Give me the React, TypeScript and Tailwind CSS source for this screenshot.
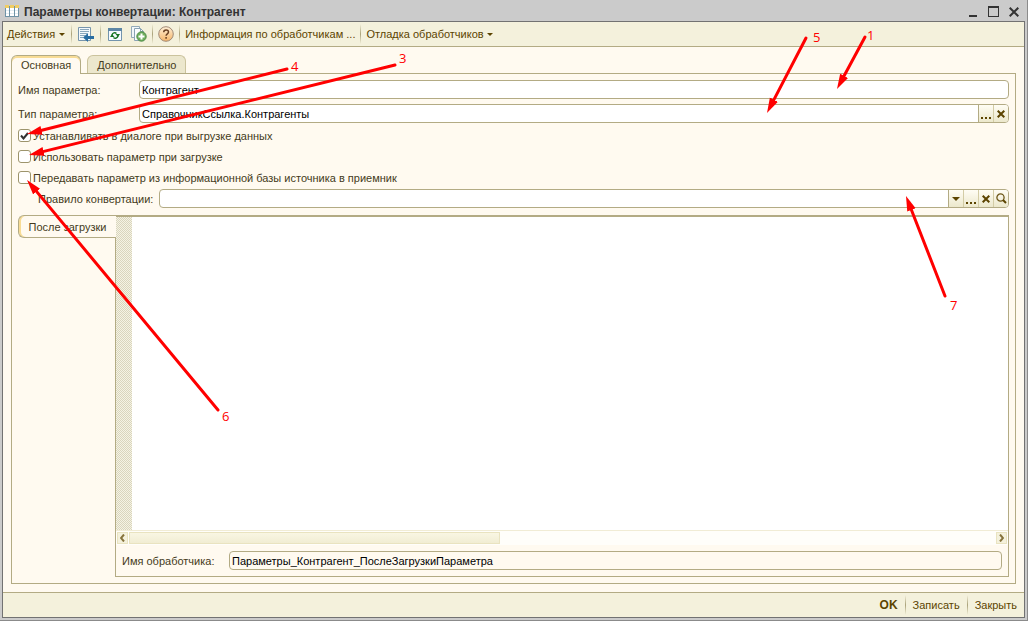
import { useState } from 'react';
import type { ReactNode } from 'react';
import clsx from 'clsx';

const arrows = [
  { label: '4', x: 291, y: 71, from: [287, 69], to: [27, 134] },
  { label: '3', x: 399, y: 63, from: [395, 65], to: [29, 155] },
  { label: '5', x: 813, y: 42, from: [806, 38], to: [767, 113] },
  { label: '1', x: 867, y: 40, from: [865, 37], to: [837, 89] },
  { label: '7', x: 950, y: 310, from: [945, 296], to: [906, 196] },
  { label: '6', x: 222, y: 421, from: [218, 410], to: [27, 180] },
];

const Arrows = () => (
  <svg
    className="absolute top-0 left-0 z-20 pointer-events-none"
    width="1029"
    height="622"
    viewBox="0 0 1029 622">
    <defs>
      <marker
        id="head"
        markerUnits="userSpaceOnUse"
        markerWidth="16"
        markerHeight="12"
        refX="15"
        refY="5"
        orient="auto">
        <path d="M0 0.5L15 5L0 9.5Z" fill="#ff0000" />
      </marker>
    </defs>
    {arrows.map(({ label, x, y, from, to }) => {
      const length = Math.hypot(to[0] - from[0], to[1] - from[1]);
      const k = (length - 8) / length;
      const endX = from[0] + (to[0] - from[0]) * k;
      const endY = from[1] + (to[1] - from[1]) * k;
      return (
        <g key={label}>
          <path
            d={`M${from[0]} ${from[1]}L${endX} ${endY}`}
            stroke="#ff0000"
            strokeWidth="3"
            strokeLinecap="round"
          />
          <path
            d={`M${from[0]} ${from[1]}L${to[0]} ${to[1]}`}
            stroke="none"
            fill="none"
            markerEnd="url(#head)"
          />
          <text x={x} y={y} fill="#ff0000" className="font-['Open_Sans',sans-serif] text-[13px]">
            {label}
          </text>
        </g>
      );
    })}
  </svg>
);

const TableIcon = () => (
  <svg width="14" height="12" viewBox="0 0 14 12" shapeRendering="crispEdges">
    <path d="M0 1H14V12H0Z" fill="#6f93a6" />
    <path d="M1 3H4V11H1ZM5 3H9V11H5ZM10 3H13V11H10Z" fill="#fff" />
    <path d="M0 0H4V3H0ZM5 0H9V3H5ZM10 0H14V3H10Z" fill="#f0cd62" />
    <path d="M1 5H4V6H1ZM5 5H9V6H5ZM10 5H13V6H10ZM1 8H4V9H1ZM5 8H9V9H5ZM10 8H13V9H10Z" fill="#e3edf2" />
  </svg>
);

const ListIcon = () => (
  <svg width="16" height="15" viewBox="0 0 16 15">
    <path d="M0.5 0.5H12.5V13.5H0.5Z" fill="#f4f9fc" stroke="#7795ac" />
    <path d="M2 2.5H11M2 4.5H11M2 6.5H9M2 8.5H7M2 10.5H5" stroke="#8aa7bc" />
    <path d="M5 10.5L10 6V9H16V12H10V15Z" fill="#286da2" />
  </svg>
);

const RefreshIcon = () => (
  <svg width="14" height="13" viewBox="0 0 14 13">
    <path d="M0.5 0.5H13.5V12.5H0.5Z" fill="#f5faff" stroke="#7394ad" />
    <path d="M0 0H14V3H0Z" fill="#5d86a5" />
    <path d="M4 7C4.5 5 7 4 8.5 5.5M10 8C9.5 10 7 11 5.5 9.5" fill="none" stroke="#167322" strokeWidth="1.4" />
    <path d="M7.5 6H12L10 9ZM6.5 9H2L4 6Z" fill="#167322" />
  </svg>
);

const CopyIcon = () => (
  <svg width="16" height="16" viewBox="0 0 16 16">
    <path d="M0.5 0.5H8.5V11.5H0.5Z" fill="#f2f7fa" stroke="#93aab9" />
    <path d="M3.5 2.5H9.5L12.5 5.5V14.5H3.5Z" fill="#fbfdff" stroke="#8aa3b4" />
    <path d="M9.5 2.5V5.5H12.5" fill="none" stroke="#8aa3b4" />
    <circle cx="10.5" cy="10.5" r="4.7" fill="#6fae5e" stroke="#4d8c46" />
    <path d="M10.5 7.5V13.5M7.5 10.5H13.5" stroke="#fff" strokeWidth="2" />
  </svg>
);

const HelpIcon = () => (
  <svg width="16" height="16" viewBox="0 0 16 16">
    <defs>
      <linearGradient id="help" x2="0" y2="1">
        <stop stopColor="#fff0d8" />
        <stop offset="1" stopColor="#f5b468" />
      </linearGradient>
    </defs>
    <circle cx="8" cy="8" r="7.3" fill="url(#help)" stroke="#a08a78" />
    <path
      d="M5.7 6.2C5.7 3.2 10.5 3.2 10.5 6C10.5 7.8 8.1 7.8 8.1 9.8M8.1 11V12.7"
      fill="none"
      stroke="#6a4022"
      strokeWidth="1.5"
    />
  </svg>
);

const DownIcon = ({ large }: { large?: boolean }) => (
  <svg width={large ? 8 : 6} height={large ? 4 : 3} viewBox="0 0 8 4">
    <path d="M0 0H8L4 4Z" fill="#5c4400" />
  </svg>
);

const DotsIcon = () => (
  <svg className="mt-2" width="10" height="2" viewBox="0 0 10 2" shapeRendering="crispEdges">
    <path d="M0 0H2V2H0ZM4 0H6V2H4ZM8 0H10V2H8Z" fill="#5c4400" />
  </svg>
);

const CrossIcon = () => (
  <svg width="8" height="8" viewBox="0 0 8 8">
    <path d="M0.7 0.7L7.3 7.3M7.3 0.7L0.7 7.3" stroke="#5c4400" strokeWidth="2" />
  </svg>
);

const SearchIcon = () => (
  <svg width="11" height="11" viewBox="0 0 11 11">
    <circle cx="4.5" cy="4.5" r="3.6" fill="none" stroke="#6d5718" strokeWidth="1.3" />
    <path d="M7 7L10 10" stroke="#5c4400" strokeWidth="2" />
  </svg>
);

const Separator = () => (
  <div className="w-px h-5 shrink-0 bg-linear-to-b from-[#f5f2dd] via-[#aaa27a] to-[#f5f2dd]" />
);

const ToolButton = ({ label, children }: { label: string; children: ReactNode }) => (
  <button type="button" aria-label={label} className="w-6 h-5 flex items-center justify-center">
    {children}
  </button>
);

const FieldButton = ({ label, children }: { label: string; children: ReactNode }) => (
  <button
    type="button"
    aria-label={label}
    className="w-[15px] shrink-0 flex items-center justify-center border-l border-[#d3cca5] first-of-type:border-[#b3ab84] bg-linear-to-b from-[#fffdf4] to-[#ece8cc]">
    {children}
  </button>
);

type FieldProps = {
  id: string;
  label: string;
  value?: string;
  labelClass: string;
  readOnly?: boolean;
  children?: ReactNode;
};

const Field = ({ id, label, value = '', labelClass, readOnly, children }: FieldProps) => (
  <div className="flex items-center">
    <label htmlFor={id} className={clsx('shrink-0 text-[#443a20]', labelClass)}>
      {label}
    </label>
    <div
      className={clsx(
        'flex flex-1 min-w-0 h-[19px] border border-[#b3ab84] rounded-[4px] overflow-hidden',
        readOnly ? 'bg-[#fffaf0]' : 'bg-white'
      )}>
      <input
        id={id}
        type="text"
        defaultValue={value}
        readOnly={readOnly}
        className="flex-1 min-w-0 px-0.5 text-black outline-none"
      />
      {children}
    </div>
  </div>
);

const Check = ({ label, checked }: { label: string; checked?: boolean }) => (
  <label className="flex items-center gap-0.5 h-[21px] text-[#443a20]">
    <span className="grid place-items-center">
      <input
        type="checkbox"
        defaultChecked={checked}
        className="peer col-start-1 row-start-1 appearance-none size-[13px] border border-[#9d946c] rounded-[3px] bg-white"
      />
      <svg
        className="col-start-1 row-start-1 pointer-events-none invisible peer-checked:visible"
        width="9"
        height="8"
        viewBox="0 0 9 8">
        <path d="M1 3.5L3.5 6.5L8 1" fill="none" stroke="#333" strokeWidth="2" />
      </svg>
    </span>
    {label}
  </label>
);

const tabs = ['Основная', 'Дополнительно'];

export default function App() {
  const [active, setActive] = useState(0);

  return (
    <div className="relative min-h-screen flex flex-col pr-px pb-px bg-white font-['Liberation_Sans',Arial,sans-serif] text-[11px] leading-4">
      <div className="flex flex-1 flex-col bg-[#cbcbcb] border-r border-b border-[#8b8b8b] px-0.5 pb-0.5">
        <header className="flex items-center h-[21px] pl-[3px] pr-1.5">
          <TableIcon />
          <h1 className="flex-1 pl-[5px] pt-0.5 text-xs font-bold text-[#333]">
            Параметры конвертации: Контрагент
          </h1>
          <div className="flex gap-2.5 pt-0.5">
            <button type="button" aria-label="Свернуть">
              <svg width="10" height="10" viewBox="0 0 10 10">
                <path d="M1 8H9V10H1Z" fill="#333" />
              </svg>
            </button>
            <button type="button" aria-label="Развернуть">
              <svg width="11" height="11" viewBox="0 0 11 11" shapeRendering="crispEdges">
                <path d="M0 0H11V11H0ZM1 2V10H10V2Z" fill="#333" fillRule="evenodd" />
              </svg>
            </button>
            <button type="button" aria-label="Закрыть окно">
              <svg width="10" height="10" viewBox="0 0 10 10">
                <path d="M0.7 0.7L9.3 9.3M9.3 0.7L0.7 9.3" stroke="#333" strokeWidth="2" />
              </svg>
            </button>
          </div>
        </header>

        <main className="flex flex-1 flex-col border border-[#727272] bg-[#fffaf0]">
          <div className="flex items-center h-[25px] px-1 border-b border-[#b3ab84] bg-[#f4f1dc] text-[#5c4400]">
            <button type="button" className="flex items-center gap-1 pr-1.5">
              Действия <DownIcon />
            </button>
            <Separator />
            <div className="px-0.5">
              <ToolButton label="Перейти">
                <ListIcon />
              </ToolButton>
            </div>
            <Separator />
            <div className="flex pl-0.5 pr-px">
              <ToolButton label="Перечитать">
                <RefreshIcon />
              </ToolButton>
              <ToolButton label="Добавить копированием">
                <CopyIcon />
              </ToolButton>
            </div>
            <Separator />
            <div className="px-px">
              <ToolButton label="Справка">
                <HelpIcon />
              </ToolButton>
            </div>
            <Separator />
            <button type="button" className="px-[5px]">
              Информация по обработчикам ...
            </button>
            <Separator />
            <button type="button" className="flex items-center gap-[3px] pl-[5px]">
              Отладка обработчиков <DownIcon />
            </button>
          </div>

          <div className="flex flex-1 flex-col px-2 pt-2 pb-2">
            <div role="tablist" className="flex gap-1.5">
              {tabs.map((tab, idx) => (
                <button
                  key={tab}
                  type="button"
                  role="tab"
                  aria-selected={active === idx}
                  onClick={() => setActive(idx)}
                  className={clsx(
                    'border border-b-0 rounded-t-md overflow-hidden text-[#443a20]',
                    active === idx
                      ? 'relative z-10 -mb-px h-[19px] px-[9px] border-[#b3ab84] bg-[#fffaf0] shadow-[inset_0_2px_0_#f8dc95]'
                      : 'h-[18px] px-[9px] border-[#cbc39d] bg-[#ece7cd]'
                  )}>
                  {tab}
                </button>
              ))}
            </div>

            <div className="flex flex-1 flex-col px-1.5 pt-1.5 pb-1.5 border border-[#b3ab84]">
              <div className="flex flex-col gap-[5px]">
                <Field id="name" label="Имя параметра:" value="Контрагент" labelClass="w-[121px]" />
                <Field
                  id="type"
                  label="Тип параметра:"
                  value="СправочникСсылка.Контрагенты"
                  labelClass="w-[121px]">
                  <FieldButton label="Выбрать тип">
                    <DotsIcon />
                  </FieldButton>
                  <FieldButton label="Очистить тип">
                    <CrossIcon />
                  </FieldButton>
                </Field>
              </div>
              <div className="pt-0.5 pb-px">
                <Check label="Устанавливать в диалоге при выгрузке данных" checked />
                <Check label="Использовать параметр при загрузке" />
                <Check label="Передавать параметр из информационной базы источника в приемник" />
              </div>
              <Field id="rule" label="Правило конвертации:" labelClass="w-[141px] pl-5">
                <FieldButton label="Открыть список">
                  <DownIcon large />
                </FieldButton>
                <FieldButton label="Выбрать правило">
                  <DotsIcon />
                </FieldButton>
                <FieldButton label="Очистить правило">
                  <CrossIcon />
                </FieldButton>
                <FieldButton label="Открыть правило">
                  <SearchIcon />
                </FieldButton>
              </Field>

              <div className="flex flex-1 pt-[7px]">
                <button
                  type="button"
                  className="relative z-10 -mr-px w-[98px] h-[23px] shrink-0 border border-r-0 border-[#b3ab84] rounded-l-md bg-[#fffaf0] text-[#443a20] shadow-[inset_2px_0_0_#f8dc95]">
                  После загрузки
                </button>
                <div className="flex flex-1 flex-col min-w-0 border border-t-2 border-[#b3ab84]">
                  <div className="flex flex-1 border-b border-[#f1ecd5]">
                    <div className="w-4 bg-[repeating-conic-gradient(#d9d5bd_0_25%,#f5f3e4_0_50%)] bg-size-[2px_2px]" />
                    <textarea
                      aria-label="После загрузки"
                      className="flex-1 resize-none bg-white outline-none"
                    />
                  </div>
                  <div className="flex h-[14px] p-px bg-[#fffefa]">
                    <button
                      type="button"
                      aria-label="Прокрутить влево"
                      className="w-[11px] flex items-center justify-center border border-[#e9e3c0] bg-[#f4f1dc]">
                      <svg width="5" height="8" viewBox="0 0 5 8">
                        <path d="M4 0.5L1 4L4 7.5" fill="none" stroke="#86733b" strokeWidth="2" />
                      </svg>
                    </button>
                    <div className="flex-1 px-px">
                      <div className="w-3/7 h-full border border-[#e9e3c0] bg-linear-to-b from-[#f9f6e3] to-[#f1edd3]" />
                    </div>
                    <button
                      type="button"
                      aria-label="Прокрутить вправо"
                      className="w-[11px] flex items-center justify-center border border-[#e9e3c0] bg-[#f4f1dc]">
                      <svg width="5" height="8" viewBox="0 0 5 8">
                        <path d="M1 0.5L4 4L1 7.5" fill="none" stroke="#86733b" strokeWidth="2" />
                      </svg>
                    </button>
                  </div>
                  <div className="p-1.5">
                    <Field
                      id="handler"
                      label="Имя обработчика:"
                      value="Параметры_Контрагент_ПослеЗагрузкиПараметра"
                      labelClass="w-[107px]"
                      readOnly
                    />
                  </div>
                </div>
              </div>
            </div>
          </div>

          <footer className="flex items-center justify-end h-[25px] px-[7px] border-t border-[#b3ab84] bg-[#f4f1dc] text-[#5c4400]">
            <button type="button" className="px-[7px] text-xs font-bold">
              OK
            </button>
            <Separator />
            <button type="button" className="px-[7px]">
              Записать
            </button>
            <Separator />
            <button type="button" className="pl-[7px]">
              Закрыть
            </button>
          </footer>
        </main>
      </div>
      <Arrows />
    </div>
  );
}
